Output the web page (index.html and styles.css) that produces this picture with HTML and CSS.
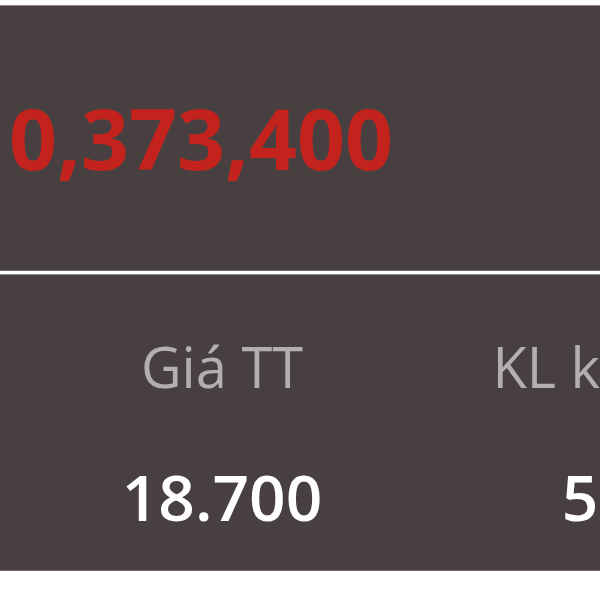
FILE: index.html
```html
<!DOCTYPE html>
<html lang="vi">
<head>
<meta charset="utf-8">
<link rel="stylesheet" href="styles.css">
</head>
<body>
<div class="page">
  <div class="panel total">
    <div class="total-value">0,373,400</div>
  </div>
  <div class="panel stats">
    <div class="cols">
      <div class="col">
        <div class="label">Giá TT</div>
        <div class="value">18.700</div>
      </div>
      <div class="col">
        <div class="label">KL khớp lệnh</div>
        <div class="value">50.000</div>
      </div>
    </div>
  </div>
</div>
</body>
</html>
```
FILE: styles.css
```css
html, body {
  margin: 0;
  padding: 0;
  background: #ffffff;
}
body {
  width: 600px;
  height: 600px;
  overflow: hidden;
  font-family: "Open Sans", "Noto Sans", sans-serif;
}
.page {
  padding-top: 6px;
  display: flex;
  flex-direction: column;
  gap: 5px;
}
.panel {
  background: #483f41;
  box-shadow: 0 -1px 0 #8d8788, 0 1px 0 #6e6768;
  overflow: hidden;
}
.total {
  height: 264px;
  box-sizing: border-box;
  padding-top: 90px;
  padding-left: 9px;
}
.total-value {
  font-size: 84px;
  line-height: 84px;
  font-weight: 700;
  color: #c4231d;
  white-space: nowrap;
}
.stats {
  height: 295px;
  box-sizing: border-box;
  padding-top: 64px;
}
.cols {
  display: flex;
  padding-left: 2px;
}
.col {
  width: 440px;
  flex: none;
  text-align: center;
  white-space: nowrap;
}
.label {
  font-size: 56px;
  line-height: 55px;
  color: #b4afaf;
  font-weight: 400;
}
.value {
  margin-top: 71px;
  font-size: 64px;
  line-height: 64px;
  font-weight: 600;
  color: #ffffff;
}
```
